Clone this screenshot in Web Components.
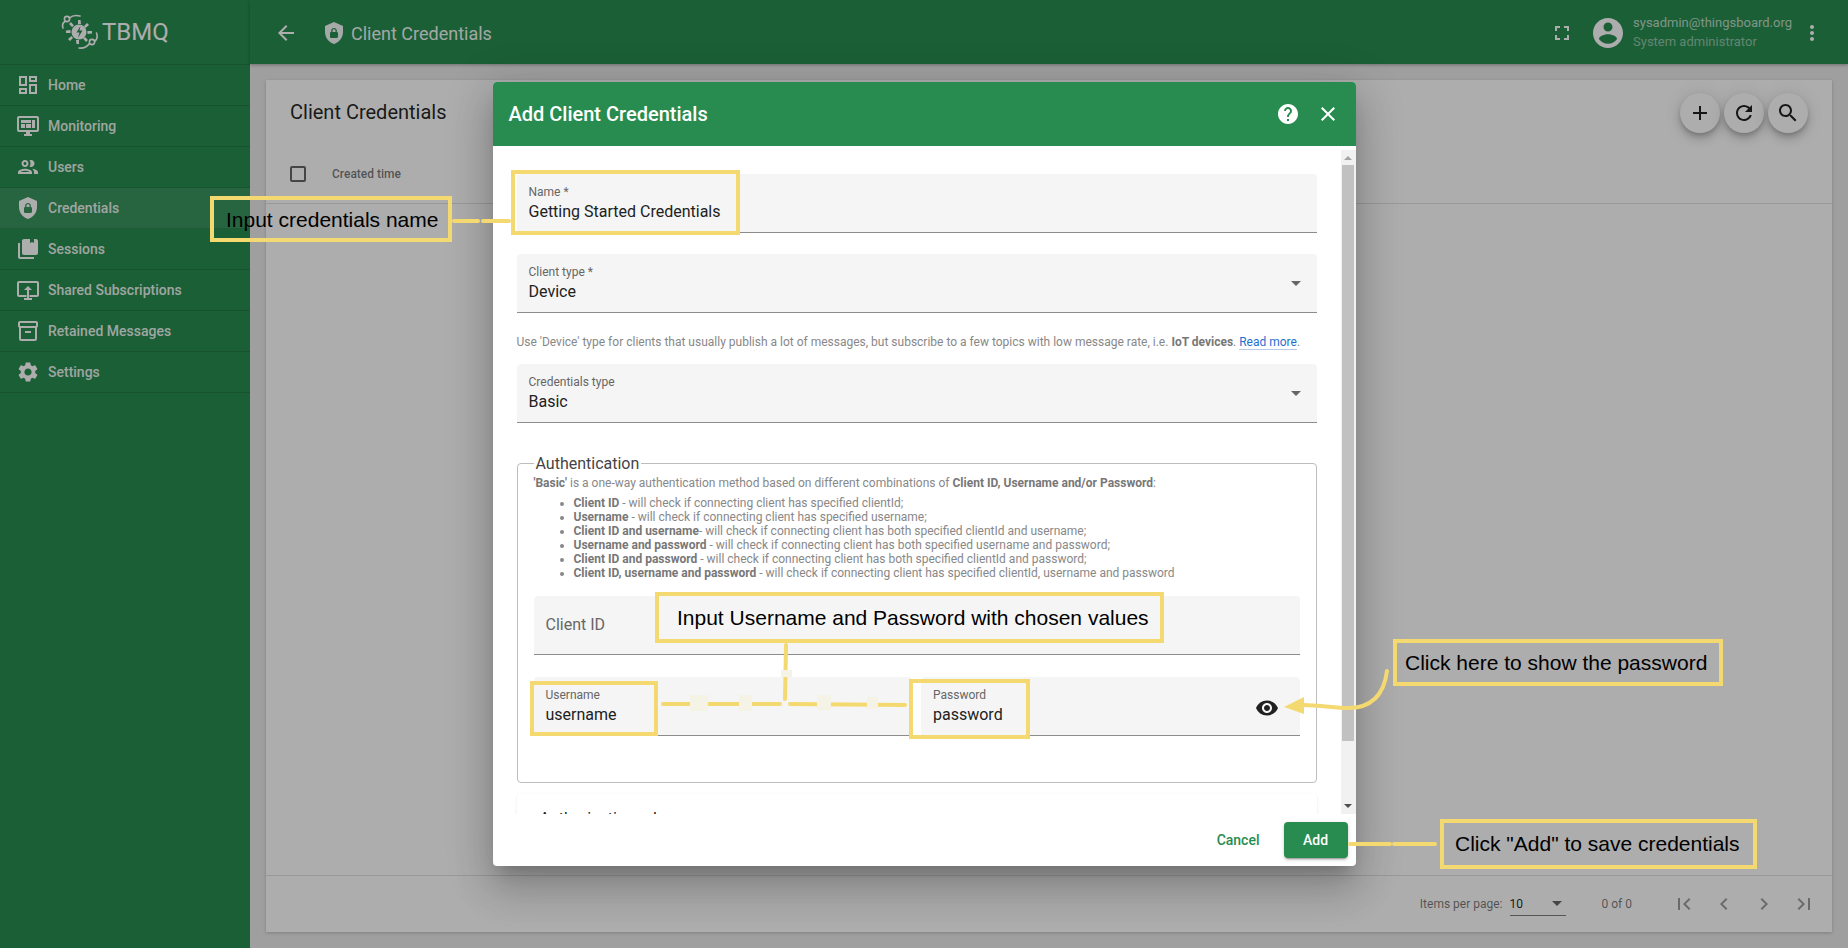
<!DOCTYPE html>
<html lang="en">
<head>
<meta charset="utf-8">
<title>Client Credentials</title>
<style>
    html, body { margin: 0; height: 948px; overflow: hidden; }
    body { font-family: Roboto, "Liberation Sans", sans-serif; }
</style>
</head>
<body>
<tb-app></tb-app>

<script>
// ICON COMPONENT
const ICONS = {
    dashboard: 'M19 5v2h-4V5h4M9 5v6H5V5h4m10 8v6h-4v-6h4M9 17v2H5v-2h4M21 3h-8v6h8V3zM11 3H3v10h8V3zm10 8h-8v10h8V11zm-10 4H3v6h8v-6z',
    monitoring: 'M21 2H3c-1.1 0-2 .9-2 2v12c0 1.1.9 2 2 2h7v2H8v2h8v-2h-2v-2h7c1.1 0 2-.9 2-2V4c0-1.1-.9-2-2-2zm0 14H3V4h18v12zM5 6h10v3H5zM16 6h3v8h-3zM5 10h4v4H5zM10 10h5v4h-5z',
    people: 'M9 13.75c-2.34 0-7 1.17-7 3.5V19h14v-1.75c0-2.33-4.66-3.5-7-3.5zM4.34 17c.84-.58 2.87-1.25 4.66-1.25s3.82.67 4.66 1.25H4.34zM9 12c1.93 0 3.5-1.57 3.5-3.5S10.93 5 9 5 5.5 6.57 5.5 8.5 7.07 12 9 12zm0-5c.83 0 1.5.67 1.5 1.5S9.83 10 9 10s-1.5-.67-1.5-1.5S8.17 7 9 7zm7.04 6.81c1.16.84 1.96 1.96 1.96 3.44V19h4v-1.75c0-2.02-3.5-3.17-5.96-3.44zM15 12c1.93 0 3.5-1.57 3.5-3.5S16.93 5 15 5c-.54 0-1.04.13-1.5.35.63.89 1 1.98 1 3.15s-.37 2.26-1 3.15c.46.22.96.35 1.5.35z',
    shield: 'M12 1L3 5v6c0 5.55 3.84 10.74 9 12 5.16-1.26 9-6.45 9-12V5l-9-4zM12 7c1.4 0 2.8 1.1 2.8 2.5V11c.6 0 1.2.6 1.2 1.3v3.5c0 .6-.6 1.2-1.3 1.2H9.2C8.6 17 8 16.4 8 15.7v-3.5c0-.6.6-1.2 1.2-1.2V9.5C9.2 8.1 10.6 7 12 7zm0 1.2c-.8 0-1.5.5-1.5 1.3V11h3V9.5c0-.8-.7-1.3-1.5-1.3z',
    sessions: 'M4 6H2v14c0 1.1.9 2 2 2h14v-2H4V6zM20 2h-2v4l-2-1-2 1V2H8c-1.1 0-2 .9-2 2v12c0 1.1.9 2 2 2h12c1.1 0 2-.9 2-2V4c0-1.1-.9-2-2-2z',
    shared: 'M21 3H3c-1.1 0-2 .9-2 2v12c0 1.1.9 2 2 2h7.5v-2H3V5h18v12h-7.5v2H21c1.1 0 2-.9 2-2V5c0-1.1-.9-2-2-2zM12 8l-4 4h3v8H8v2h8v-2h-3v-8h3z',
    archive: 'M20 2H4c-1 0-2 .9-2 2v3.01c0 .72.43 1.34 1 1.69V20c0 1.1 1.1 2 2 2h14c.9 0 2-.9 2-2V8.7c.57-.35 1-.97 1-1.69V4c0-1.1-1-2-2-2zm-1 18H5V9h14v11zm1-13H4V4h16v3zM9 12h6v2H9z',
    settings: 'M19.14 12.94c.04-.3.06-.61.06-.94 0-.32-.02-.64-.07-.94l2.03-1.58c.18-.14.23-.41.12-.61l-1.92-3.32c-.12-.22-.37-.29-.59-.22l-2.39.96c-.5-.38-1.03-.7-1.62-.94l-.36-2.54c-.04-.24-.24-.41-.48-.41h-3.84c-.24 0-.43.17-.47.41l-.36 2.54c-.59.24-1.13.57-1.62.94l-2.39-.96c-.22-.08-.47 0-.59.22L2.74 8.87c-.12.21-.08.47.12.61l2.03 1.58c-.05.3-.09.63-.09.94s.02.64.07.94l-2.03 1.58c-.18.14-.23.41-.12.61l1.92 3.32c.12.22.37.29.59.22l2.39-.96c.5.38 1.03.7 1.62.94l.36 2.54c.05.24.24.41.48.41h3.84c.24 0 .44-.17.47-.41l.36-2.54c.59-.24 1.13-.56 1.62-.94l2.39.96c.22.08.47 0 .59-.22l1.92-3.32c.12-.22.07-.47-.12-.61l-2.01-1.58zM12 15.6c-1.98 0-3.6-1.62-3.6-3.6s1.62-3.6 3.6-3.6 3.6 1.62 3.6 3.6-1.62 3.6-3.6 3.6z',
    back: 'M20 11H7.83l5.59-5.59L12 4l-8 8 8 8 1.41-1.41L7.83 13H20v-2z',
    fullscreen: 'M7 14H5v5h5v-2H7v-3zm-2-4h2V7h3V5H5v5zm12 7h-3v2h5v-5h-2v3zM14 5v2h3v3h2V5h-5z',
    account: 'M12 2C6.48 2 2 6.48 2 12s4.48 10 10 10 10-4.48 10-10S17.52 2 12 2zm0 3c1.66 0 3 1.34 3 3s-1.34 3-3 3-3-1.34-3-3 1.34-3 3-3zm0 14.2c-2.5 0-4.71-1.28-6-3.22.03-1.99 4-3.08 6-3.08 1.99 0 5.97 1.09 6 3.08-1.29 1.94-3.5 3.22-6 3.22z',
    more: 'M12 8c1.1 0 2-.9 2-2s-.9-2-2-2-2 .9-2 2 .9 2 2 2zm0 2c-1.1 0-2 .9-2 2s.9 2 2 2 2-.9 2-2-.9-2-2-2zm0 6c-1.1 0-2 .9-2 2s.9 2 2 2 2-.9 2-2-.9-2-2-2z',
    help: 'M12 2C6.48 2 2 6.48 2 12s4.48 10 10 10 10-4.48 10-10S17.52 2 12 2zm1 17h-2v-2h2v2zm2.07-7.75l-.9.92C13.45 12.9 13 13.5 13 15h-2v-.5c0-1.1.45-2.1 1.17-2.83l1.24-1.26c.37-.36.59-.86.59-1.41 0-1.1-.9-2-2-2s-2 .9-2 2H8c0-2.21 1.79-4 4-4s4 1.79 4 4c0 .88-.36 1.68-.93 2.25z',
    close: 'M19 6.41L17.59 5 12 10.59 6.41 5 5 6.41 10.59 12 5 17.59 6.41 19 12 13.41 17.59 19 19 17.59 13.41 12z',
    add: 'M19 13h-6v6h-2v-6H5v-2h6V5h2v6h6v2z',
    refresh: 'M17.65 6.35C16.2 4.9 14.21 4 12 4c-4.42 0-7.99 3.58-7.99 8s3.57 8 7.99 8c3.73 0 6.84-2.55 7.73-6h-2.08c-.82 2.33-3.04 4-5.65 4-3.31 0-6-2.69-6-6s2.69-6 6-6c1.66 0 3.14.69 4.22 1.78L13 11h7V4l-2.35 2.35z',
    search: 'M15.5 14h-.79l-.28-.27C15.41 12.59 16 11.11 16 9.5 16 5.91 13.09 3 9.5 3S3 5.91 3 9.5 5.91 16 9.5 16c1.61 0 3.09-.59 4.23-1.57l.27.28v.79l5 4.99L20.49 19l-4.99-5zm-6 0C7.01 14 5 11.99 5 9.5S7.01 5 9.5 5 14 7.01 14 9.5 11.99 14 9.5 14z',
    eye: 'M12 4.5C7 4.5 2.73 7.61 1 12c1.73 4.39 6 7.5 11 7.5s9.27-3.11 11-7.5c-1.73-4.39-6-7.5-11-7.5zM12 17c-2.76 0-5-2.24-5-5s2.24-5 5-5 5 2.24 5 5-2.24 5-5 5zm0-8c-1.66 0-3 1.34-3 3s1.34 3 3 3 3-1.34 3-3-1.34-3-3-3z',
    first: 'M18.41 16.59L13.82 12l4.59-4.59L17 6l-6 6 6 6zM6 6h2v12H6z',
    prev: 'M15.41 7.41L14 6l-6 6 6 6 1.41-1.41L10.83 12z',
    next: 'M10 6L8.59 7.41 13.17 12l-4.58 4.59L10 18l6-6z',
    last: 'M5.59 7.41L10.18 12l-4.59 4.59L7 18l6-6-6-6zM16 6h2v12h-2z'
};

class TbIcon extends HTMLElement {
    constructor() {
        super();
        const shadow = this.attachShadow({ mode: 'open' });
        const size = this.getAttribute('size') || 24;
        shadow.innerHTML = `
            <style>
                :host { display: inline-flex; flex: none; width: ${size}px; height: ${size}px; color: inherit; }
                svg { display: block; width: 100%; height: 100%; fill: currentColor; }
            </style>
            <svg viewBox="0 0 24 24"><path fill-rule="evenodd" d="${ICONS[this.getAttribute('name')]}"/></svg>
        `;
    }
}
customElements.define('tb-icon', TbIcon);

// SIDEBAR COMPONENTS
const navItemTemplate = document.createElement('template');
navItemTemplate.innerHTML = `
    <style>
        :host {
            display: flex;
            align-items: center;
            gap: 8px;
            height: 40px;
            padding-left: 16px;
            border-bottom: 1px solid rgba(0, 0, 0, .12);
            color: #fff;
            font-size: 14px;
            font-weight: 500;
        }
        :host([active]) { background: rgba(255, 255, 255, .08); }
        span { color: rgba(255, 255, 255, .92); }
    </style>
    <slot name="icon"></slot>
    <span><slot></slot></span>
`;

class TbNavItem extends HTMLElement {
    constructor() {
        super();
        const shadow = this.attachShadow({ mode: 'open' });
        shadow.appendChild(navItemTemplate.content.cloneNode(true));
    }
}
customElements.define('tb-nav-item', TbNavItem);

const sidebarTemplate = document.createElement('template');
sidebarTemplate.innerHTML = `
    <style>
        :host {
            display: flex;
            flex-direction: column;
            flex: none;
            width: 250px;
            height: 100%;
            background: #288c50;
            color: #fff;
        }
        .logo {
            display: flex;
            align-items: center;
            gap: 2px;
            height: 65px;
            padding-left: 60px;
            box-sizing: border-box;
            border-bottom: 1px solid rgba(0, 0, 0, .12);
            font-size: 24px;
        }
        .logo svg { width: 40px; height: 40px; flex: none; }
    </style>
    <div class="logo">
        <svg viewBox="0 0 40 40" fill="none" stroke="#fff">
            <circle cx="7" cy="7" r="2.6" stroke-width="1.6"/>
            <path d="M9.5 6C12 3.5 16 3 20 4M5 9.5C2.5 11 2 13 3 16" stroke-width="1.6" stroke-linecap="round"/>
            <circle cx="32" cy="30" r="2.6" stroke-width="1.6"/>
            <path d="M35 29c2-1.500 2.500-5 1.500-8M29.500 31.500C27 35 23 36.500 19 36" stroke-width="1.600" stroke-linecap="round"/>
            <g fill="#fff" stroke="none">
                <circle cx="19" cy="20" r="7.500"/>
                <path d="M18 8h2.500l.5 4h-3zM27 11l2 2-3.500 3-1.500-2zM32 19v2.500l-4.500.5v-3zM28 28l-2 2-3-3.500 2-1.500zM19 32h-2.500l-.5-4h3zM10 29l-2-2 3.500-3 1.500 2zM6 21v-2.500l4.500-.5v3zM9 12l2-2 3 3.500-2 1.500z"/>
            </g>
            <path d="M20.500 14l-4 6.500h3l-1.500 5.500 4.500-7.500h-3z" fill="#288c50" stroke="none"/>
        </svg>
        <span>TBMQ</span>
    </div>
    <slot></slot>
`;

class TbSidebar extends HTMLElement {
    constructor() {
        super();
        const shadow = this.attachShadow({ mode: 'open' });
        shadow.appendChild(sidebarTemplate.content.cloneNode(true));
    }
}
customElements.define('tb-sidebar', TbSidebar);

// TOOLBAR COMPONENT
const toolbarTemplate = document.createElement('template');
toolbarTemplate.innerHTML = `
    <style>
        :host {
            display: flex;
            align-items: center;
            flex: none;
            height: 64px;
            padding: 2px 16px 0;
            box-sizing: border-box;
            background: #288c50;
            color: #fff;
            box-shadow: 0 1px 3px rgba(0, 0, 0, .3);
            position: relative;
        }
        .btn { display: flex; align-items: center; justify-content: center; width: 40px; height: 40px; flex: none; }
        .crumb { display: flex; align-items: center; gap: 5px; margin-left: 16px; font-size: 18px; color: rgba(255, 255, 255, .95); }
        .spacer { flex: 1; }
        .user { display: flex; flex-direction: column; gap: 4px; margin: -3px 0 0 7px; font-size: 13px; line-height: 15px; }
        .user .mail { color: rgba(255, 255, 255, .7); }
        .user .role { color: rgba(255, 255, 255, .5); }
        .avatar { margin-left: 16px; }
    </style>
    <div class="btn"><tb-icon name="back"></tb-icon></div>
    <div class="crumb"><tb-icon name="shield"></tb-icon><span>Client Credentials</span></div>
    <div class="spacer"></div>
    <tb-icon name="fullscreen"></tb-icon>
    <tb-icon class="avatar" name="account" size="36"></tb-icon>
    <div class="user">
        <span class="mail">sysadmin@thingsboard.org</span>
        <span class="role">System administrator</span>
    </div>
    <div class="btn"><tb-icon name="more"></tb-icon></div>
`;

class TbToolbar extends HTMLElement {
    constructor() {
        super();
        const shadow = this.attachShadow({ mode: 'open' });
        shadow.appendChild(toolbarTemplate.content.cloneNode(true));
    }
}
customElements.define('tb-toolbar', TbToolbar);

// TABLE CARD COMPONENT
const cardTemplate = document.createElement('template');
cardTemplate.innerHTML = `
    <style>
        :host {
            display: flex;
            flex-direction: column;
            flex: 1;
            background: #fff;
            box-shadow: 0 1px 3px rgba(0, 0, 0, .2);
            color: rgba(0, 0, 0, .87);
        }
        .head { display: flex; align-items: center; justify-content: space-between; height: 64px; box-sizing: border-box; padding: 2px 24px 0; }
        h1 { margin: -2px 0 0; font-size: 20px; font-weight: 400; }
        .fabs { display: flex; gap: 4px; }
        .fab {
            display: flex;
            align-items: center;
            justify-content: center;
            width: 40px;
            height: 40px;
            border-radius: 50%;
            background: #fff;
            box-shadow: 0 3px 5px -1px rgba(0, 0, 0, .2), 0 6px 10px 0 rgba(0, 0, 0, .14), 0 1px 18px 0 rgba(0, 0, 0, .12);
        }
        .row {
            display: flex;
            align-items: center;
            gap: 26px;
            height: 59px;
            padding: 0 24px;
            border-bottom: 1px solid rgba(0, 0, 0, .12);
            font-size: 12px;
            font-weight: 500;
            color: rgba(0, 0, 0, .54);
        }
        .check { width: 12px; height: 12px; border: 2px solid rgba(0, 0, 0, .6); border-radius: 2px; }
        .body { flex: 1; }
        .foot { display: flex; align-items: center; justify-content: flex-end; height: 56px; padding-right: 8px; border-top: 1px solid rgba(0, 0, 0, .12); }
    </style>
    <div class="head">
        <h1>Client Credentials</h1>
        <div class="fabs">
            <div class="fab"><tb-icon name="add"></tb-icon></div>
            <div class="fab"><tb-icon name="refresh"></tb-icon></div>
            <div class="fab"><tb-icon name="search"></tb-icon></div>
        </div>
    </div>
    <div class="row"><div class="check"></div><span>Created time</span></div>
    <div class="body"></div>
    <div class="foot"><tb-paginator></tb-paginator></div>
`;

class TbCard extends HTMLElement {
    constructor() {
        super();
        const shadow = this.attachShadow({ mode: 'open' });
        shadow.appendChild(cardTemplate.content.cloneNode(true));
    }
}
customElements.define('tb-card', TbCard);

// PAGINATOR COMPONENT
const paginatorTemplate = document.createElement('template');
paginatorTemplate.innerHTML = `
    <style>
        :host { display: flex; align-items: center; font-size: 12px; color: rgba(0, 0, 0, .54); }
        .select {
            display: flex;
            align-items: center;
            justify-content: space-between;
            width: 56px;
            height: 24px;
            margin-left: 7px;
            box-sizing: border-box;
            padding-right: 4px;
            border-bottom: 1px solid rgba(0, 0, 0, .5);
            color: rgba(0, 0, 0, .87);
        }
        .caret { width: 0; height: 0; border: 5px solid transparent; border-top-color: rgba(0, 0, 0, .6); border-bottom: 0; }
        .range { margin: 0 32px 0 36px; }
        .btn { display: flex; align-items: center; justify-content: center; width: 40px; height: 40px; color: rgba(0, 0, 0, .38); }
    </style>
    <span>Items per page:</span>
    <div class="select"><span>10</span><div class="caret"></div></div>
    <span class="range">0 of 0</span>
    <div class="btn"><tb-icon name="first"></tb-icon></div>
    <div class="btn"><tb-icon name="prev"></tb-icon></div>
    <div class="btn"><tb-icon name="next"></tb-icon></div>
    <div class="btn"><tb-icon name="last"></tb-icon></div>
`;

class TbPaginator extends HTMLElement {
    constructor() {
        super();
        const shadow = this.attachShadow({ mode: 'open' });
        shadow.appendChild(paginatorTemplate.content.cloneNode(true));
    }
}
customElements.define('tb-paginator', TbPaginator);

// FORM FIELD COMPONENT
const fieldTemplate = document.createElement('template');
fieldTemplate.innerHTML = `
    <style>
        :host {
            display: flex;
            align-items: center;
            height: 58px;
            padding: 0 12px;
            background: #f5f5f5;
            border-bottom: 1px solid #8c8c8c;
            border-radius: 4px 4px 0 0;
            color: #212121;
        }
        .text { flex: 1; min-width: 0; }
        .label { display: block; font-size: 12px; line-height: 14px; margin-bottom: 3px; color: #666; }
        .value { display: block; font-size: 16px; line-height: 20px; }
        :host([placeholder]) .label { font-size: 16px; line-height: 20px; margin: 0; }
        :host([placeholder]) .value { display: none; }
    </style>
    <div class="text">
        <span class="label"></span>
        <span class="value"><slot></slot></span>
    </div>
    <slot name="suffix"></slot>
`;

class TbField extends HTMLElement {
    constructor() {
        super();
        const shadow = this.attachShadow({ mode: 'open' });
        shadow.appendChild(fieldTemplate.content.cloneNode(true));
        shadow.querySelector('.label').textContent = this.getAttribute('label');
    }
}
customElements.define('tb-field', TbField);

// AUTHENTICATION FIELDSET COMPONENT
const authBoxTemplate = document.createElement('template');
authBoxTemplate.innerHTML = `
    <style>
        :host { display: block; margin-top: 31px; }
        fieldset {
            margin: 0;
            padding: 0 16px 46px;
            border: 1px solid #bdbdbd;
            border-radius: 4px;
        }
        legend { padding: 0 2px; font-size: 16px; line-height: 19px; color: #444; }
        .info { margin-top: 3px; font-size: 12px; line-height: 14px; color: #888; }
        .fields { display: flex; flex-direction: column; gap: 22px; margin-top: 16px; }
    </style>
    <fieldset>
        <legend>Authentication</legend>
        <div class="info"><slot name="info"></slot></div>
        <div class="fields"><slot></slot></div>
    </fieldset>
`;

class TbAuthBox extends HTMLElement {
    constructor() {
        super();
        const shadow = this.attachShadow({ mode: 'open' });
        shadow.appendChild(authBoxTemplate.content.cloneNode(true));
    }
}
customElements.define('tb-auth-box', TbAuthBox);

// DIALOG COMPONENT
const dialogTemplate = document.createElement('template');
dialogTemplate.innerHTML = `
    <style>
        :host {
            display: flex;
            flex-direction: column;
            width: 863px;
            height: 784px;
            background: #fff;
            border-radius: 4px;
            overflow: hidden;
            box-shadow: 0 11px 15px -7px rgba(0, 0, 0, .2), 0 24px 38px 3px rgba(0, 0, 0, .14), 0 9px 46px 8px rgba(0, 0, 0, .12);
        }
        header {
            display: flex;
            align-items: center;
            justify-content: space-between;
            flex: none;
            height: 64px;
            padding: 0 8px 0 16px;
            background: #288c50;
            color: #fff;
        }
        h2 { margin: 0; font-size: 20px; font-weight: 500; }
        .tools { display: flex; }
        .tool { display: flex; align-items: center; justify-content: center; width: 40px; height: 40px; }
        .main { display: flex; flex: 1; min-height: 0; }
        .scroll { flex: 1; min-width: 0; overflow: hidden; padding: 28px 24px 0; }
        .bar { display: flex; flex-direction: column; align-items: center; flex: none; width: 15px; margin-top: 4px; background: #f1f1f1; }
        .bar .up, .bar .down { flex: none; width: 0; height: 0; margin: 6px 0 5px; border: 4px solid transparent; }
        .bar .up { border-bottom: 4px solid #a3a3a3; border-top: 0; }
        .bar .down { border-top: 4px solid #505050; border-bottom: 0; margin-top: auto; margin-bottom: 6px; }
        .bar .thumb { width: 12px; height: 576px; background: #c1c1c1; }
        footer { display: flex; align-items: center; justify-content: flex-end; gap: 8px; flex: none; height: 52px; padding-right: 8px; box-sizing: border-box; }
        button {
            height: 36px;
            border: 0;
            border-radius: 4px;
            padding: 0 16px;
            background: none;
            font: 500 14px Roboto, "Liberation Sans", sans-serif;
            color: #288c50;
        }
        button.primary {
            width: 64px;
            padding: 0;
            background: #288c50;
            color: #fff;
            box-shadow: 0 3px 1px -2px rgba(0, 0, 0, .2), 0 2px 2px 0 rgba(0, 0, 0, .14), 0 1px 5px 0 rgba(0, 0, 0, .12);
        }
    </style>
    <header>
        <h2>Add Client Credentials</h2>
        <div class="tools">
            <div class="tool"><tb-icon name="help"></tb-icon></div>
            <div class="tool"><tb-icon name="close"></tb-icon></div>
        </div>
    </header>
    <div class="main">
        <div class="scroll"><slot></slot></div>
        <div class="bar">
            <div class="up"></div>
            <div class="thumb"></div>
            <div class="down"></div>
        </div>
    </div>
    <footer>
        <button>Cancel</button>
        <button class="primary">Add</button>
    </footer>
`;

class TbDialog extends HTMLElement {
    constructor() {
        super();
        const shadow = this.attachShadow({ mode: 'open' });
        shadow.appendChild(dialogTemplate.content.cloneNode(true));
    }
}
customElements.define('tb-dialog', TbDialog);

// CALLOUT COMPONENT (annotation box drawn over the screenshot)
const calloutTemplate = document.createElement('template');
calloutTemplate.innerHTML = `
    <style>
        :host {
            position: absolute;
            display: flex;
            align-items: center;
            box-sizing: border-box;
            border: 4px solid #f4d971;
            font: 21px "Liberation Sans", Arial, sans-serif;
            color: #000;
            white-space: nowrap;
        }
    </style>
    <slot></slot>
`;

class TbCallout extends HTMLElement {
    constructor() {
        super();
        const shadow = this.attachShadow({ mode: 'open' });
        shadow.appendChild(calloutTemplate.content.cloneNode(true));
    }
}
customElements.define('tb-callout', TbCallout);

// CONNECTOR LINES BETWEEN CALLOUTS AND FIELDS
const connectorsTemplate = document.createElement('template');
connectorsTemplate.innerHTML = `
    <style>
        :host { position: absolute; left: 0; top: 0; width: 1848px; height: 948px; pointer-events: none; }
        svg { display: block; }
    </style>
    <svg width="1848" height="948" viewBox="0 0 1848 948" fill="none" stroke="#f4d971" stroke-width="4" stroke-linecap="round">
        <path d="M454 221H478M483 221H509"/>
        <path d="M1350 844H1390M1394 844H1435"/>
        <path d="M786 645L785 699M663 704H780M790 704L905 705"/>
        <g fill="#f5f3e6" stroke="none">
            <rect x="690" y="695" width="18" height="16"/>
            <rect x="739" y="695" width="13" height="16"/>
            <rect x="817" y="695" width="14" height="15"/>
            <rect x="867" y="697" width="11" height="12"/>
            <rect x="781" y="670" width="11" height="7"/>
        </g>
        <path d="M1387 671C1384 695 1372 708 1348 708C1335 708 1320 705 1303 705"/>
        <path d="M1284 707L1304 697V714Z" fill="#f4d971" stroke="none"/>
    </svg>
`;

class TbConnectors extends HTMLElement {
    constructor() {
        super();
        const shadow = this.attachShadow({ mode: 'open' });
        shadow.appendChild(connectorsTemplate.content.cloneNode(true));
    }
}
customElements.define('tb-connectors', TbConnectors);

// APP SHELL
const appTemplate = document.createElement('template');
appTemplate.innerHTML = `
    <style>
        :host { display: flex; width: 1848px; height: 948px; position: relative; overflow: hidden; background: #eaeaea; }
        .content { display: flex; flex-direction: column; flex: 1; min-width: 0; }
        .page { display: flex; flex: 1; min-height: 0; padding: 16px; }
        .backdrop {
            position: absolute;
            inset: 0;
            display: flex;
            align-items: center;
            justify-content: center;
            background: rgba(0, 0, 0, .32);
        }
        .mb { margin-bottom: 21px; }
        .caret { width: 0; height: 0; margin-right: 4px; border: 5px solid transparent; border-top-color: #666; border-bottom: 0; }
        .hint { margin: 22px 0 15px; font-size: 12px; line-height: 14px; color: #888; }
        .hint b, .info b { color: #777; }
        .hint a { color: #1f6fd0; text-decoration: none; border-bottom: 1px solid #b9cbe6; }
        .info ul { margin: 6px 0 0; padding-left: 40px; }
        .two { display: grid; grid-template-columns: 1fr 1fr; gap: 9px; }
        .eye { color: #212121; margin: 3px 9px 0 0; }
        .rules {
            margin-top: 11px;
            height: 60px;
            padding: 15px 23px;
            border-radius: 4px;
            box-shadow: 0 1px 3px rgba(0, 0, 0, .1);
            font-size: 16px;
            line-height: 19px;
            color: #212121;
        }
    </style>
    <tb-sidebar>
        <tb-nav-item><tb-icon slot="icon" name="dashboard"></tb-icon>Home</tb-nav-item>
        <tb-nav-item><tb-icon slot="icon" name="monitoring"></tb-icon>Monitoring</tb-nav-item>
        <tb-nav-item><tb-icon slot="icon" name="people"></tb-icon>Users</tb-nav-item>
        <tb-nav-item active><tb-icon slot="icon" name="shield"></tb-icon>Credentials</tb-nav-item>
        <tb-nav-item><tb-icon slot="icon" name="sessions"></tb-icon>Sessions</tb-nav-item>
        <tb-nav-item><tb-icon slot="icon" name="shared"></tb-icon>Shared Subscriptions</tb-nav-item>
        <tb-nav-item><tb-icon slot="icon" name="archive"></tb-icon>Retained Messages</tb-nav-item>
        <tb-nav-item><tb-icon slot="icon" name="settings"></tb-icon>Settings</tb-nav-item>
    </tb-sidebar>
    <div class="content">
        <tb-toolbar></tb-toolbar>
        <div class="page"><tb-card></tb-card></div>
    </div>
    <div class="backdrop">
        <tb-dialog>
            <tb-field class="mb" label="Name *">Getting Started Credentials</tb-field>
            <tb-field label="Client type *">Device<div slot="suffix" class="caret"></div></tb-field>
            <p class="hint">Use 'Device' type for clients that usually publish a lot of messages, but subscribe to a few topics with low message rate, i.e. <b>IoT devices</b>. <a>Read more</a>.</p>
            <tb-field class="mb" label="Credentials type">Basic<div slot="suffix" class="caret"></div></tb-field>
            <tb-auth-box>
                <div slot="info" class="info">
                    <div><b>'Basic'</b> is a one-way authentication method based on different combinations of <b>Client ID, Username and/or Password</b>:</div>
                    <ul>
                        <li><b>Client ID</b> - will check if connecting client has specified clientId;</li>
                        <li><b>Username</b> - will check if connecting client has specified username;</li>
                        <li><b>Client ID and username</b>- will check if connecting client has both specified clientId and username;</li>
                        <li><b>Username and password</b> - will check if connecting client has both specified username and password;</li>
                        <li><b>Client ID and password</b> - will check if connecting client has both specified clientId and password;</li>
                        <li><b>Client ID, username and password</b> - will check if connecting client has specified clientId, username and password</li>
                    </ul>
                </div>
                <tb-field label="Client ID" placeholder></tb-field>
                <div class="two">
                    <tb-field label="Username">username</tb-field>
                    <tb-field label="Password">password<tb-icon slot="suffix" class="eye" name="eye"></tb-icon></tb-field>
                </div>
            </tb-auth-box>
            <div class="rules">Authorization rules</div>
        </tb-dialog>
    </div>
    <tb-connectors></tb-connectors>
    <tb-callout style="left:210px;top:196px;width:242px;height:46px;padding:2px 0 0 12px">Input credentials name</tb-callout>
    <tb-callout style="left:511px;top:170px;width:229px;height:65px"></tb-callout>
    <tb-callout style="left:655px;top:592px;width:509px;height:51px;padding-left:18px">Input Username and Password with chosen values</tb-callout>
    <tb-callout style="left:530px;top:681px;width:128px;height:55px"></tb-callout>
    <tb-callout style="left:909px;top:679px;width:121px;height:60px"></tb-callout>
    <tb-callout style="left:1393px;top:639px;width:330px;height:47px;padding-left:8px">Click here to show the password</tb-callout>
    <tb-callout style="left:1440px;top:819px;width:317px;height:50px;padding-left:11px">Click "Add" to save credentials</tb-callout>
`;

class TbApp extends HTMLElement {
    constructor() {
        super();
        const shadow = this.attachShadow({ mode: 'open' });
        shadow.appendChild(appTemplate.content.cloneNode(true));
    }
}
customElements.define('tb-app', TbApp);
</script>
</body>
</html>
